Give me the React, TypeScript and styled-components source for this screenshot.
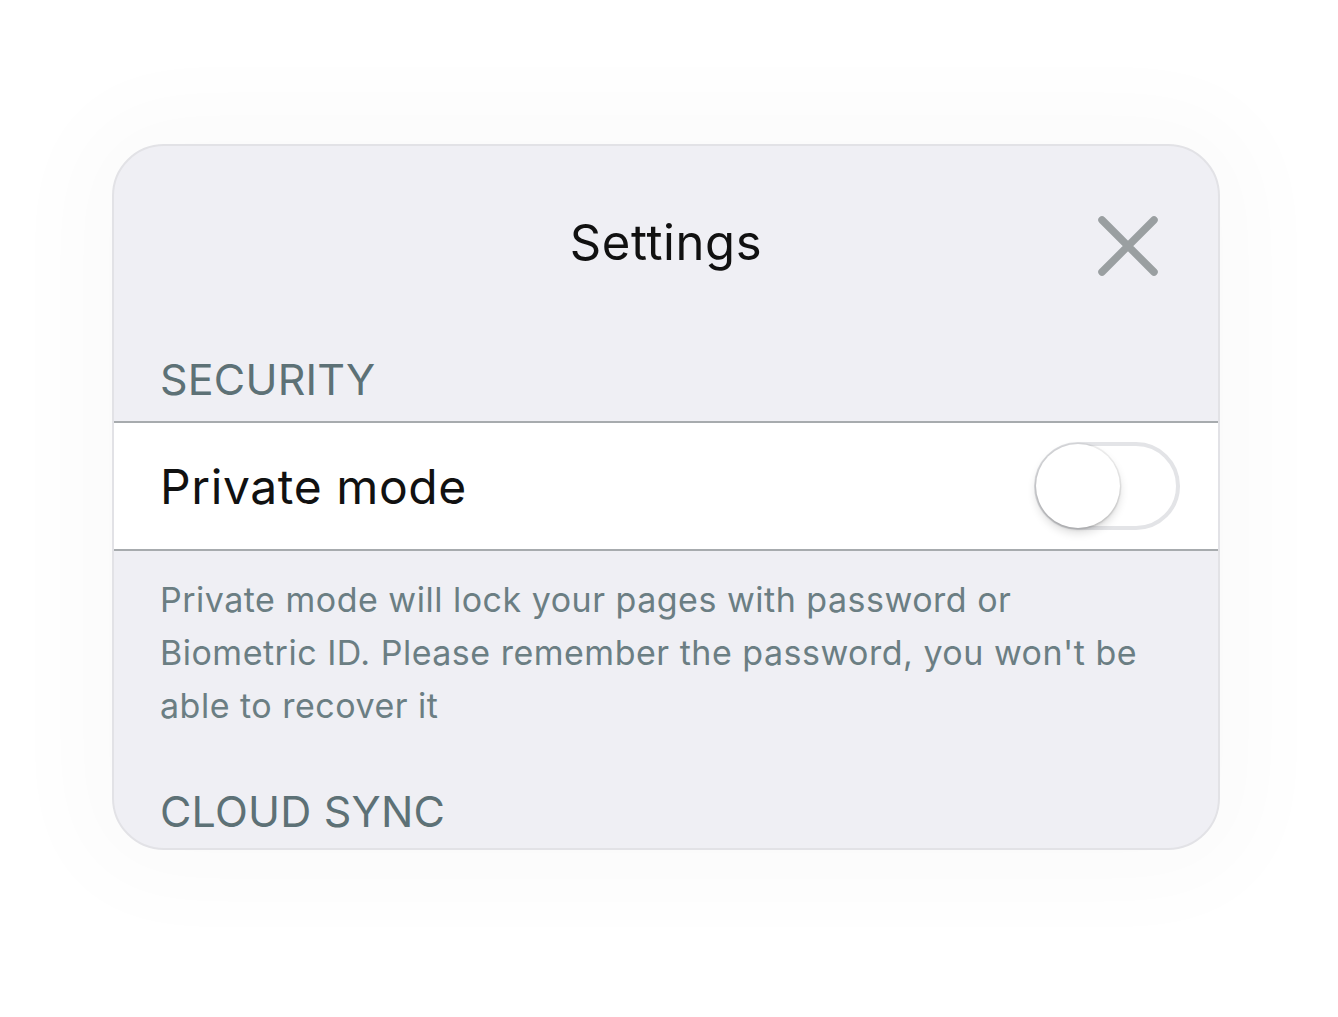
import React from "react";
import styled, { createGlobalStyle } from "styled-components";

const Global = createGlobalStyle`
  html, body { margin: 0; padding: 0; background: #ffffff; }
  body { font-family: Inter, "Noto Sans", sans-serif; }
`;

const Page = styled.div`
  width: 1338px;
  height: 1017px;
  box-sizing: border-box;
  padding-top: 144px;
  padding-left: 112px;
  background: #ffffff;
`;

const Card = styled.div`
  width: 1108px;
  height: 706px;
  box-sizing: border-box;
  background: #efeff4;
  border: 2px solid #e2e2e6;
  border-radius: 52px;
  overflow: hidden;
  box-shadow: 0 0 90px 40px rgba(0, 0, 0, 0.018);
  display: flex;
  flex-direction: column;
`;

const Header = styled.div`
  height: 200px;
  flex: 0 0 auto;
  display: grid;
  grid-template-columns: 1fr auto 1fr;
  align-items: start;
`;

const Title = styled.div`
  grid-column: 2;
  font-size: 49px;
  color: #111;
  padding-top: 67px;
  letter-spacing: 0.6px;
`;

const CloseButton = styled.div`
  grid-column: 3;
  justify-self: end;
  margin-top: 70px;
  margin-right: 60px;
  width: 60px;
  height: 60px;
  display: flex;
  align-items: center;
  justify-content: center;
`;

const SectionLabel = styled.div<{ $top: number }>`
  font-size: 43px;
  color: #5d7176;
  padding-left: 46px;
  margin-top: ${(p) => p.$top}px;
  line-height: 56px;
  letter-spacing: 0.2px;
`;

const Row = styled.div`
  background: #ffffff;
  border-top: 2px solid #a7abae;
  border-bottom: 2px solid #a7abae;
  height: 126px;
  margin-top: 14px;
  display: flex;
  align-items: center;
  justify-content: space-between;
  padding: 0 38px 0 46px;
  flex: 0 0 auto;
`;

const RowLabel = styled.div`
  font-size: 48px;
  color: #111;
  letter-spacing: 0.6px;
`;

const Toggle = styled.div`
  position: relative;
  width: 146px;
  height: 88px;
  box-sizing: border-box;
  border-radius: 44px;
  border: 4px solid #e3e4e7;
  background: #ffffff;
`;

const Knob = styled.div`
  position: absolute;
  left: -2px;
  top: -2px;
  width: 84px;
  height: 84px;
  border-radius: 50%;
  background: #ffffff;
  box-shadow: 0 5px 10px rgba(0, 0, 0, 0.14), 0 2px 3px rgba(0, 0, 0, 0.1), 0 0 0 1.5px rgba(0, 0, 0, 0.06);
`;

const Description = styled.div`
  font-size: 34px;
  line-height: 53px;
  color: #6b7e83;
  padding: 22px 66px 0 46px;
  letter-spacing: 0.5px;
`;

export default function App() {
  return (
    <>
      <Global />
      <Page>
        <Card>
          <Header>
            <Title>Settings</Title>
            <CloseButton>
              <svg width="60" height="60" viewBox="0 0 60 60">
                <path
                  d="M4 4 L56 56 M56 4 L4 56"
                  stroke="#9a9fa1"
                  strokeWidth="7.5"
                  strokeLinecap="round"
                />
              </svg>
            </CloseButton>
          </Header>
          <SectionLabel $top={5}>SECURITY</SectionLabel>
          <Row>
            <RowLabel>Private mode</RowLabel>
            <Toggle>
              <Knob />
            </Toggle>
          </Row>
          <Description>
            Private mode will lock your pages with password or Biometric ID. Please remember the password, you won't be
            able to recover it
          </Description>
          <SectionLabel $top={51}>CLOUD SYNC</SectionLabel>
        </Card>
      </Page>
    </>
  );
}
